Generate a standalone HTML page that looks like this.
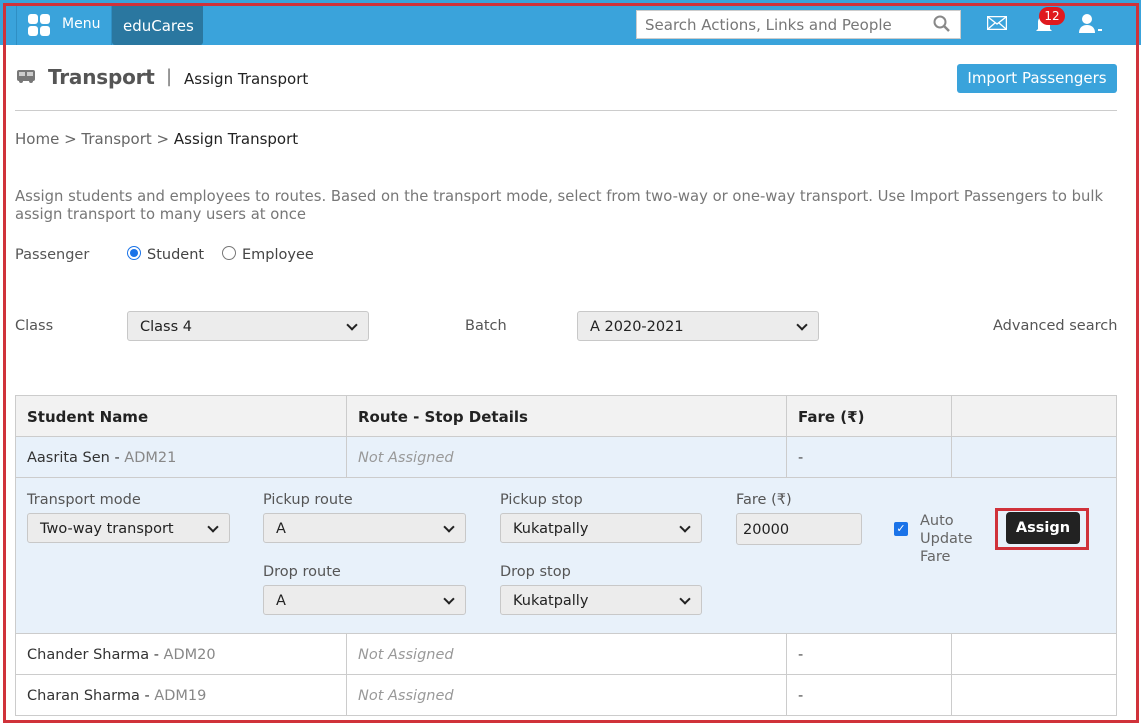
<!DOCTYPE html>
<html><head><meta charset="utf-8"><style>
*{box-sizing:border-box;margin:0;padding:0}
body{width:1141px;height:725px;background:#fff;font-family:"DejaVu Sans","Liberation Sans",sans-serif;font-size:14px;color:#555;position:relative;overflow:hidden}
.a{position:absolute;white-space:nowrap}
.t{margin-top:2px}
.frame{position:absolute;left:3px;top:3px;width:1136px;height:720px;border:3px solid #d0323a;z-index:10;pointer-events:none}
.sel{position:absolute;height:30px;border:1px solid #c8c8c8;border-radius:3px;background:#ececec;color:#222;font-size:14.5px;padding:7px 12px}
.sel:after{content:"";position:absolute;right:12px;top:9px;width:6px;height:6px;border-right:2px solid #222;border-bottom:2px solid #222;transform:rotate(45deg)}
.lbl{position:absolute;font-size:14.5px;color:#555;margin-top:2px}
.line{position:absolute;background:#ccc}
</style></head><body>
<div class="frame"></div>
<div class="a" style="left:0;top:0;width:1141px;height:45px;background:#3aa3db"></div>
<div class="a" style="left:16px;top:6px;width:96px;height:39px;background:#3aa3db;border-right:1px solid #2f8fc4;border-left:1px solid #2f8fc4"></div>
<div class="a" style="left:28px;top:14px;width:22px;height:22px">
<div class="a" style="left:0;top:0;width:10px;height:10px;background:#fff;border-radius:3px"></div>
<div class="a" style="left:12px;top:0;width:10px;height:10px;background:#fff;border-radius:3px"></div>
<div class="a" style="left:0;top:12px;width:10px;height:10px;background:#fff;border-radius:3px"></div>
<div class="a" style="left:12px;top:12px;width:10px;height:10px;background:#fff;border-radius:3px"></div></div>
<div class="a" style="left:62px;top:16px;color:#fff;font-size:14px">Menu</div>
<div class="a" style="left:112px;top:6px;width:91px;height:39px;background:#2a77a0;border-radius:0 0 3px 3px;color:#fff;font-size:15px;padding:11px 0 0 11px">eduCares</div>
<div class="a" style="left:636px;top:10px;width:325px;height:29px;background:#fff;border:1px solid #ccc;color:#777;font-size:15px;padding:5px 8px">Search Actions, Links and People</div>
<svg class="a" style="left:933px;top:15px" width="18" height="18"><circle cx="7" cy="7" r="5.5" fill="none" stroke="#888" stroke-width="2"/><line x1="11" y1="11" x2="16" y2="16" stroke="#888" stroke-width="2.5"/></svg>
<svg class="a" style="left:987px;top:16px" width="20" height="14"><rect x="0.5" y="0.5" width="19" height="13" fill="none" stroke="#fff" stroke-width="1.5"/><path d="M1 1L10 8L19 1M1 13L8 7M19 13L12 7" fill="none" stroke="#fff" stroke-width="1.3"/></svg>
<svg class="a" style="left:1035px;top:14px" width="18" height="20"><path d="M3 15V8a6 6 0 0112 0v7l2 2H1z" fill="#fff"/></svg>
<div class="a" style="left:1039px;top:7px;width:26px;height:18px;background:#e0191e;border-radius:9px;color:#fff;font-size:12px;text-align:center;line-height:18px">12</div>
<svg class="a" style="left:1077px;top:13px" width="28" height="22"><circle cx="10" cy="6" r="5" fill="#fff"/><path d="M2 20c0-6 4-8 8-8s8 2 8 8z" fill="#fff"/><rect x="21" y="16" width="4" height="2" fill="#fff"/></svg>
<svg class="a" style="left:17px;top:70px" width="18" height="13"><rect x="0" y="0" width="18" height="11" rx="2" fill="#777"/><rect x="2" y="2" width="6" height="4" fill="#ccc"/><rect x="10" y="2" width="6" height="4" fill="#ccc"/><circle cx="4" cy="11" r="2" fill="#777"/><circle cx="14" cy="11" r="2" fill="#777"/></svg>
<div class="a" style="left:48px;top:65px;font-size:20px;font-weight:bold;color:#555;letter-spacing:-0.2px">Transport</div>
<div class="a" style="left:166px;top:66px;font-size:18px;color:#777">|</div>
<div class="a" style="left:184px;top:70px;font-size:15px;color:#222">Assign Transport</div>
<div class="a" style="left:957px;top:64px;width:160px;height:29px;background:#3aa3db;border-radius:3px;color:#fff;font-size:15px;text-align:center;line-height:29px">Import Passengers</div>
<div class="line" style="left:15px;top:110px;width:1102px;height:1px"></div>
<div class="a" style="left:15px;top:130px;font-size:15px;color:#666">Home &gt; Transport &gt; <span style="color:#222">Assign Transport</span></div>
<div class="a" style="left:15px;top:188px;font-size:14.8px;color:#777;white-space:normal;width:1100px;line-height:18px">Assign students and employees to routes. Based on the transport mode, select from two-way or one-way transport. Use Import Passengers to bulk assign transport to many users at once</div>
<div class="lbl" style="left:15px;top:245px">Passenger</div>
<div class="a" style="left:127px;top:246px;width:14px;height:14px;border-radius:50%;border:1px solid #1a73e8;background:#fff"><div style="margin:2px;width:8px;height:8px;border-radius:50%;background:#1a73e8"></div></div>
<div class="lbl" style="left:147px;top:245px;color:#444">Student</div>
<div class="a" style="left:222px;top:246px;width:14px;height:14px;border-radius:50%;border:1px solid #777;background:#fff"></div>
<div class="lbl" style="left:242px;top:245px;color:#444">Employee</div>
<div class="lbl" style="left:15px;top:316px">Class</div>
<div class="sel" style="left:127px;top:311px;width:242px">Class 4</div>
<div class="lbl" style="left:465px;top:316px">Batch</div>
<div class="sel" style="left:577px;top:311px;width:242px">A 2020-2021</div>
<div class="lbl" style="left:993px;top:316px">Advanced search</div>
<div class="a" style="left:15px;top:395px;width:1102px;height:42px;background:#f2f2f2"></div>
<div class="a" style="left:15px;top:437px;width:1102px;height:196px;background:#e8f1fa"></div>
<div class="line" style="left:15px;top:395px;width:1102px;height:1px"></div>
<div class="line" style="left:15px;top:436px;width:1102px;height:1px"></div>
<div class="line" style="left:15px;top:477px;width:1102px;height:1px"></div>
<div class="line" style="left:15px;top:633px;width:1102px;height:1px"></div>
<div class="line" style="left:15px;top:674px;width:1102px;height:1px"></div>
<div class="line" style="left:15px;top:715px;width:1102px;height:1px"></div>
<div class="line" style="left:15px;top:395px;width:1px;height:321px"></div>
<div class="line" style="left:1116px;top:395px;width:1px;height:321px"></div>
<div class="line" style="left:346px;top:395px;width:1px;height:83px"></div>
<div class="line" style="left:786px;top:395px;width:1px;height:83px"></div>
<div class="line" style="left:951px;top:395px;width:1px;height:83px"></div>
<div class="line" style="left:346px;top:633px;width:1px;height:83px"></div>
<div class="line" style="left:786px;top:633px;width:1px;height:83px"></div>
<div class="line" style="left:951px;top:633px;width:1px;height:83px"></div>
<div class="a" style="left:27px;top:408px;font-size:15px;font-weight:bold;color:#222">Student Name</div>
<div class="a" style="left:358px;top:408px;font-size:15px;font-weight:bold;color:#222">Route - Stop Details</div>
<div class="a" style="left:798px;top:408px;font-size:15px;font-weight:bold;color:#222">Fare (₹)</div>
<div class="a" style="left:27px;top:450px;font-size:14.5px;color:#333">Aasrita Sen - <span style="color:#888">ADM21</span></div>
<div class="a" style="left:358px;top:450px;font-size:14.5px;color:#999;font-style:italic">Not Assigned</div>
<div class="a" style="left:798px;top:450px;font-size:14.5px;color:#444">-</div>
<div class="lbl" style="left:27px;top:490px">Transport mode</div>
<div class="sel" style="left:27px;top:513px;width:203px">Two-way transport</div>
<div class="lbl" style="left:263px;top:490px">Pickup route</div>
<div class="sel" style="left:263px;top:513px;width:203px">A</div>
<div class="lbl" style="left:263px;top:562px">Drop route</div>
<div class="sel" style="left:263px;top:585px;width:203px">A</div>
<div class="lbl" style="left:500px;top:490px">Pickup stop</div>
<div class="sel" style="left:500px;top:513px;width:202px">Kukatpally</div>
<div class="lbl" style="left:500px;top:562px">Drop stop</div>
<div class="sel" style="left:500px;top:585px;width:202px">Kukatpally</div>
<div class="lbl" style="left:736px;top:490px">Fare (₹)</div>
<div class="a" style="left:736px;top:513px;width:126px;height:32px;border:1px solid #c8c8c8;border-radius:3px;background:#ececec;color:#222;font-size:14.5px;padding:8px 6px">20000</div>
<div class="a" style="left:894px;top:522px;width:14px;height:14px;background:#1a73e8;border-radius:2px;color:#fff;font-size:11px;text-align:center;line-height:14px">✓</div>
<div class="a" style="left:920px;top:512px;font-size:14.5px;color:#666;line-height:18px;white-space:normal;width:60px">Auto Update Fare</div>
<div class="a" style="left:995px;top:508px;width:94px;height:42px;border:3px solid #d0323a"></div>
<div class="a" style="left:1006px;top:512px;width:74px;height:32px;background:#222;border-radius:4px;color:#fff;font-weight:bold;font-size:14.5px;text-align:center;line-height:32px">Assign</div>
<div class="a" style="left:27px;top:647px;font-size:14.5px;color:#333">Chander Sharma - <span style="color:#888">ADM20</span></div>
<div class="a" style="left:358px;top:647px;font-size:14.5px;color:#999;font-style:italic">Not Assigned</div>
<div class="a" style="left:798px;top:647px;font-size:14.5px;color:#444">-</div>
<div class="a" style="left:27px;top:688px;font-size:14.5px;color:#333">Charan Sharma - <span style="color:#888">ADM19</span></div>
<div class="a" style="left:358px;top:688px;font-size:14.5px;color:#999;font-style:italic">Not Assigned</div>
<div class="a" style="left:798px;top:688px;font-size:14.5px;color:#444">-</div>
</body></html>
